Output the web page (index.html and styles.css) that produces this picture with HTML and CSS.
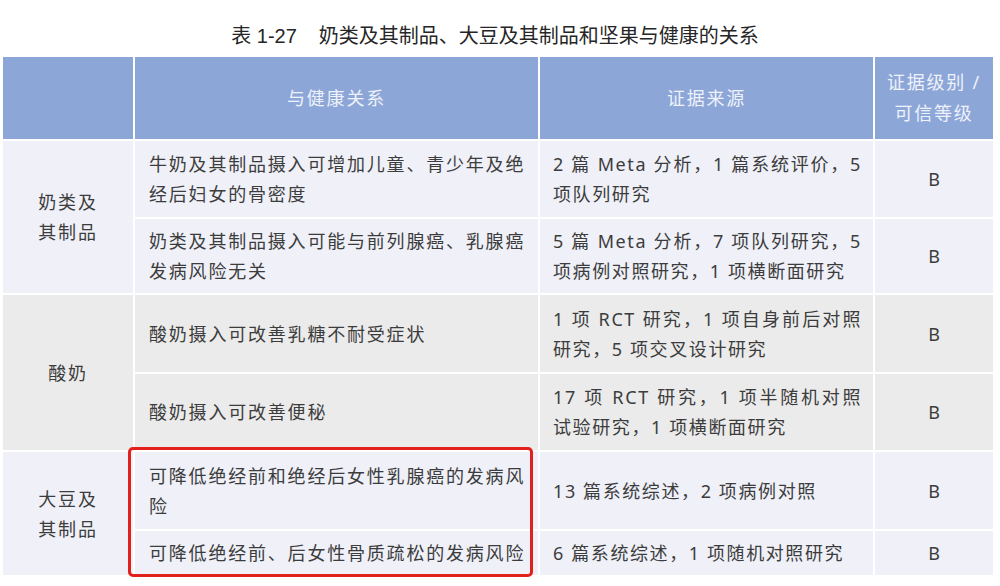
FILE: index.html
```html
<!DOCTYPE html>
<html lang="zh-CN">
<head>
<meta charset="utf-8">
<title>表 1-27</title>
<link rel="stylesheet" href="styles.css">
</head>
<body>
<div class="page">
  <h1 class="caption"><span class="num">表 1-27</span>奶类及其制品、大豆及其制品和坚果与健康的关系</h1>
  <div class="table-wrap">
    <table class="evidence">
      <colgroup>
        <col class="c-food">
        <col class="c-rel">
        <col class="c-src">
        <col class="c-grade">
      </colgroup>
      <thead>
        <tr class="head">
          <th></th>
          <th>与健康关系</th>
          <th>证据来源</th>
          <th>证据级别 /<br>可信等级</th>
        </tr>
      </thead>
      <tbody class="g-blue">
        <tr class="r1">
          <td class="food" rowspan="2">奶类及<br>其制品</td>
          <td class="rel">牛奶及其制品摄入可增加儿童、青少年及绝<br>经后妇女的骨密度</td>
          <td class="src"><span class="ln full">2 篇 Meta 分析，1 篇系统评价，5</span><span class="ln">项队列研究</span></td>
          <td class="grade">B</td>
        </tr>
        <tr class="r2">
          <td class="rel">奶类及其制品摄入可能与前列腺癌、乳腺癌<br>发病风险无关</td>
          <td class="src"><span class="ln full">5 篇 Meta 分析，7 项队列研究，5</span><span class="ln">项病例对照研究，1 项横断面研究</span></td>
          <td class="grade">B</td>
        </tr>
      </tbody>
      <tbody class="g-gray">
        <tr class="r3">
          <td class="food" rowspan="2">酸奶</td>
          <td class="rel">酸奶摄入可改善乳糖不耐受症状</td>
          <td class="src"><span class="ln full">1 项 RCT 研究，1 项自身前后对照</span><span class="ln">研究，5 项交叉设计研究</span></td>
          <td class="grade">B</td>
        </tr>
        <tr class="r4">
          <td class="rel">酸奶摄入可改善便秘</td>
          <td class="src"><span class="ln full">17 项 RCT 研究，1 项半随机对照</span><span class="ln">试验研究，1 项横断面研究</span></td>
          <td class="grade">B</td>
        </tr>
      </tbody>
      <tbody class="g-blue">
        <tr class="r5">
          <td class="food" rowspan="2">大豆及<br>其制品</td>
          <td class="rel">可降低绝经前和绝经后女性乳腺癌的发病风<br>险</td>
          <td class="src">13 篇系统综述，2 项病例对照</td>
          <td class="grade">B</td>
        </tr>
        <tr class="r6">
          <td class="rel">可降低绝经前、后女性骨质疏松的发病风险</td>
          <td class="src">6 篇系统综述，1 项随机对照研究</td>
          <td class="grade">B</td>
        </tr>
      </tbody>
    </table>
    <div class="highlight" aria-hidden="true"></div>
  </div>
</div>
</body>
</html>
```
FILE: styles.css
```css
html, body {
  margin: 0;
  padding: 0;
  background: #ffffff;
}

body {
  font-family: "Noto Sans", "Noto Sans CJK SC", sans-serif;
  color: #3c3c3c;
}

.page {
  width: 1000px;
}

.caption {
  margin: 0;
  padding: 22px 10px 7px 0;
  height: 28px;
  line-height: 28px;
  font-family: "Liberation Sans", "Noto Sans CJK SC", sans-serif;
  font-size: 20px;
  font-weight: normal;
  color: #262626;
  text-align: center;
}

.caption .num {
  margin-right: 22px;
}

.table-wrap {
  position: relative;
  margin-left: 3px;
  width: 990px;
}

.evidence {
  width: 990px;
  table-layout: fixed;
  border-collapse: collapse;
  font-size: 18px;
  letter-spacing: 1.8px;
}

.c-food { width: 131px; }
.c-rel { width: 405px; }
.c-src { width: 335px; }
.c-grade { width: 119px; }

.evidence th,
.evidence td {
  border: 2px solid #ffffff;
  padding: 0;
  vertical-align: middle;
}

.evidence thead th {
  border-top: 0;
}

.evidence th:first-child,
.evidence td.food {
  border-left: 0;
}

.evidence th:last-child,
.evidence td.grade {
  border-right: 0;
}

.head th {
  height: 82px;
  background: #8da6d8;
  color: #eef2fa;
  font-weight: normal;
  line-height: 31px;
  text-align: center;
}

.g-blue td {
  background: #eff0f8;
}

.g-gray td {
  background: #ebebeb;
}

.evidence .r2 td,
.evidence .r4 td,
.evidence .r6 td {
  border-top: 1px solid #f8f8fc;
}

.r1 { height: 78px; }
.r2 { height: 76px; }
.r3 { height: 79px; }
.r4 { height: 78px; }
.r5 { height: 79px; }
.r6 { height: 46px; }

.evidence td {
  line-height: 30px;
}

.evidence td.food {
  text-align: center;
}

.evidence td.rel {
  padding: 0 8px 0 14px;
}

.evidence td.src {
  padding: 0 11px 0 13px;
  letter-spacing: 1.6px;
}

.src .ln {
  display: block;
  white-space: nowrap;
}

.src .ln.full {
  white-space: normal;
  text-align: justify;
  text-align-last: justify;
}

.evidence td.grade {
  text-align: center;
  letter-spacing: 0;
}

.highlight {
  position: absolute;
  left: 125px;
  top: 390px;
  width: 405px;
  height: 130px;
  box-sizing: border-box;
  border: 3px solid #e3211c;
  border-radius: 5px;
  pointer-events: none;
}
```
